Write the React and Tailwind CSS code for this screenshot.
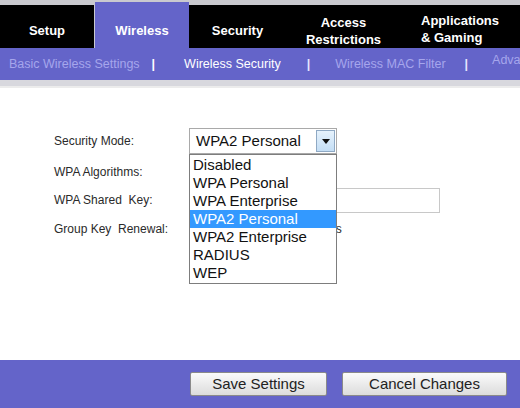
import { useState } from 'react';

const options = ['Disabled', 'WPA Personal', 'WPA Enterprise', 'WPA2 Personal', 'WPA2 Enterprise', 'RADIUS', 'WEP'];

export default function App() {
  const [mode] = useState('WPA2 Personal');

  return (
    <div className="w-[520px] h-[408px] overflow-hidden bg-white flex flex-col font-['Liberation_Sans',Arial,sans-serif]">
      {/* Main tabs */}
      <div className="h-[48px] flex items-end bg-[#c9c9cf]">
        <div className="w-[94px] h-[43px] bg-black text-white font-bold text-[13px] flex items-center justify-center pt-[9px]">Setup</div>
        <div className="w-[94px] h-[46px] bg-[#6464c9] text-white font-bold text-[13px] flex items-center justify-center ml-[1px] pt-[12px]">Wireless</div>
        <div className="w-[97px] h-[43px] bg-black text-white font-bold text-[13px] flex items-center justify-center pt-[9px]">Security</div>
        <div className="w-[115px] h-[43px] bg-black text-white font-bold text-[13px] leading-[17px] flex flex-col items-center justify-center pt-[8px]">
          <span>Access</span>
          <span>Restrictions</span>
        </div>
        <div className="flex-1 h-[43px] bg-black text-white font-bold text-[13px] leading-[17px] flex flex-col items-start justify-center pl-[20px] pt-[4px]">
          <span>Applications</span>
          <span>&amp; Gaming</span>
        </div>
      </div>

      {/* Sub nav */}
      <div className="h-[32px] bg-[#6464c9] flex items-center text-[12.5px] whitespace-nowrap">
        <span className="ml-[9px] text-[#a6a6ec]">Basic Wireless Settings</span>
        <span className="ml-[12px] text-white font-bold">|</span>
        <span className="ml-[29px] text-white">Wireless Security</span>
        <span className="ml-[26px] text-[#e6e6ff] font-bold">|</span>
        <span className="ml-[25px] text-[#a6a6ec]">Wireless MAC Filter</span>
        <span className="ml-[19px] text-[#e6e6ff] font-bold">|</span>
        <span className="ml-[24px] text-[#a6a6ec] self-start mt-[3px]">Advanced</span>
      </div>
      <div className="h-[6px] bg-[#d8d8de]" />
      <div className="h-[2px] bg-[#ececec]" />

      {/* Content */}
      <div className="flex-1 relative text-[12px] text-[#2a2a2a]">
        <div className="pt-[40px] pl-[54px] flex flex-col">
          <div className="h-[26px] flex items-center">
            <span className="w-[135px]">Security Mode:</span>
            <div className="w-[148px] h-[26px] border border-[#a9a9a9] flex items-center bg-white relative">
              <span className="pl-[6px] text-[15px] text-[#111] flex-1">{mode}</span>
              <div className="w-[19px] h-[22px] mr-[1px] border border-[#8fa9c4] bg-gradient-to-b from-[#e6f2fc] to-[#c4def5] flex items-center justify-center">
                <svg width="8" height="5" viewBox="0 0 8 5"><path d="M0 0h8L4 5z" fill="#111" /></svg>
              </div>

              {/* Open list */}
              <div className="absolute left-[-1px] top-[25px] w-[148px] border border-[#7d7d7d] bg-white py-[1px] z-10">
                {options.map((o) => (
                  <div
                    key={o}
                    className={`h-[18px] leading-[18px] pl-[3px] text-[15px] ${o === mode ? 'bg-[#3399ff] text-white' : 'text-[#111]'}`}
                  >
                    {o}
                  </div>
                ))}
              </div>
            </div>
          </div>
          <div className="h-[29px] flex items-center mt-[3px]">
            <span className="w-[135px]">WPA Algorithms:</span>
          </div>
          <div className="h-[28px] flex items-center">
            <span className="w-[135px]">WPA Shared&nbsp; Key:</span>
            <div className="w-[251px] h-[25px] border border-[#c8c8c8] bg-white" />
          </div>
          <div className="h-[30px] flex items-center">
            <span className="w-[135px]">Group Key&nbsp; Renewal:</span>
            <div className="w-[100px] h-[22px] border border-[#c8c8c8] bg-white" />
            <span className="ml-[8px]">seconds</span>
          </div>
        </div>
      </div>

      {/* Footer */}
      <div className="h-[48px] bg-[#6464c9] flex items-center pl-[190px] gap-[15px]">
        <button className="w-[137px] h-[24px] rounded-[2px] border border-[#8a8a8a] bg-gradient-to-b from-[#fbfbfb] to-[#dcdcdc] text-[15px] text-[#222]">Save Settings</button>
        <button className="w-[165px] h-[24px] rounded-[2px] border border-[#8a8a8a] bg-gradient-to-b from-[#fbfbfb] to-[#dcdcdc] text-[15px] text-[#222]">Cancel Changes</button>
      </div>
    </div>
  );
}
